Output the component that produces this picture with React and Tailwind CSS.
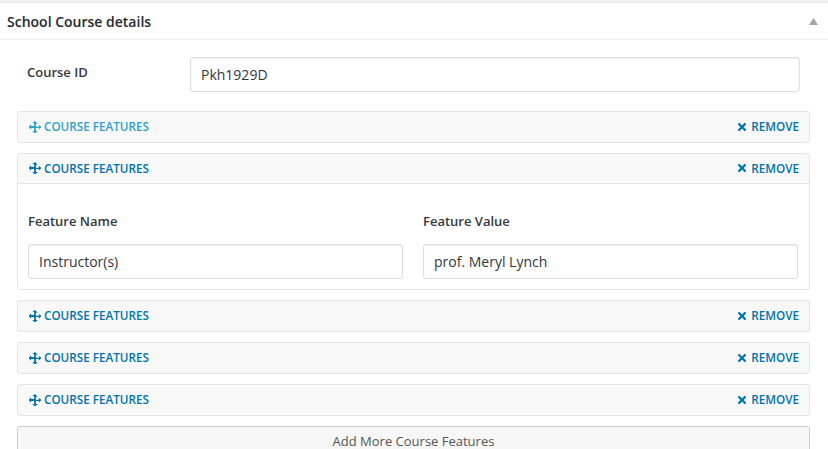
import React from "react";

const MoveIcon = () => (
  <svg width="12" height="12" viewBox="0 0 20 20" fill="currentColor" className="shrink-0">
    <path d="M10 0l4.5 4.5h-3v5h5v-3L21 10l-4.5 4.5v-3h-5v5h3L10 21l-4.5-4.5h3v-5h-5v3L-1 10l4.5-4.5v3h5v-5h-3z" />
  </svg>
);

const XIcon = () => (
  <svg width="8" height="8" viewBox="0 0 10 10" className="shrink-0">
    <path d="M1.5 1.5l7 7M8.5 1.5l-7 7" stroke="currentColor" strokeWidth="2.8" strokeLinecap="square" />
  </svg>
);

const RowHeader = ({ light, border }) => (
  <div
    className={`flex items-center justify-between h-[30px] pl-[11px] pr-[10px] text-[11.7px] font-semibold uppercase ${
      border ? "border-b border-[#e5e5e5]" : ""
    }`}
  >
    <div className={`flex items-center gap-[3px] ${light ? "text-[#2ea2cc]" : "text-[#0073aa]"}`}>
      <MoveIcon />
      <span>Course Features</span>
    </div>
    <div className="flex items-center gap-[5px] text-[#0073aa]">
      <XIcon />
      <span>Remove</span>
    </div>
  </div>
);

const Input = ({ value }) => (
  <div className="h-[35px] flex items-center px-[10px] bg-white border border-[#ddd] rounded-[3px] shadow-[inset_0_1px_2px_rgba(0,0,0,0.07)] text-[14px] text-[#32373c]">
    {value}
  </div>
);

export default function App() {
  return (
    <div
      className="w-[828px] h-[449px] overflow-hidden bg-white"
      style={{ fontFamily: '"Open Sans", "Noto Sans", sans-serif' }}
    >
      <div className="h-[3px] bg-[#f1f1f1] border-b border-[#e5e5e5]" />
      {/* Panel header */}
      <div className="flex items-center justify-between h-[37px] pl-[7px] pr-[10px] border-b border-[#eee]">
        <h2 className="text-[14px] font-semibold text-[#23282d]">School Course details</h2>
        <svg width="9" height="7" viewBox="0 0 9 7" className="mt-[1px]">
          <path d="M4.5 0L9 7H0z" fill="#a0a5aa" />
        </svg>
      </div>

      <div className="pl-[17px] pr-[18px] pt-[17px]">
        {/* Course ID */}
        <div className="flex px-[10px]">
          <label className="w-[163px] pt-[6px] text-[13px] font-semibold text-[#32373c]">Course ID</label>
          <div className="flex-1">
            <Input value="Pkh1929D" />
          </div>
        </div>

        <div className="mt-[19px] flex flex-col gap-[10px]">
          <div className="bg-[#f8f8f8] border border-[#e5e5e5] rounded-[3px]">
            <RowHeader light />
          </div>

          <div className="bg-[#f8f8f8] border border-[#e5e5e5] rounded-[3px]">
            <RowHeader border />
            <div className="bg-white grid grid-cols-2 gap-[20px] pl-[10px] pr-[11px] pt-[28px] pb-[10px] rounded-b-[3px]">
              <div>
                <div className="text-[13px] font-semibold text-[#32373c] leading-[18px] mb-[14px]">Feature Name</div>
                <Input value="Instructor(s)" />
              </div>
              <div>
                <div className="text-[13px] font-semibold text-[#32373c] leading-[18px] mb-[14px]">Feature Value</div>
                <Input value="prof. Meryl Lynch" />
              </div>
            </div>
          </div>

          {[0, 1, 2].map((i) => (
            <div key={i} className="bg-[#f8f8f8] border border-[#e5e5e5] rounded-[3px]">
              <RowHeader />
            </div>
          ))}

          <button className="h-[40px] w-full flex justify-center items-start pt-[5px] bg-[#f7f7f7] border border-[#ccc] rounded-[3px] text-[13px] leading-[18px] text-[#555]">
            Add More Course Features
          </button>
        </div>
      </div>
    </div>
  );
}
